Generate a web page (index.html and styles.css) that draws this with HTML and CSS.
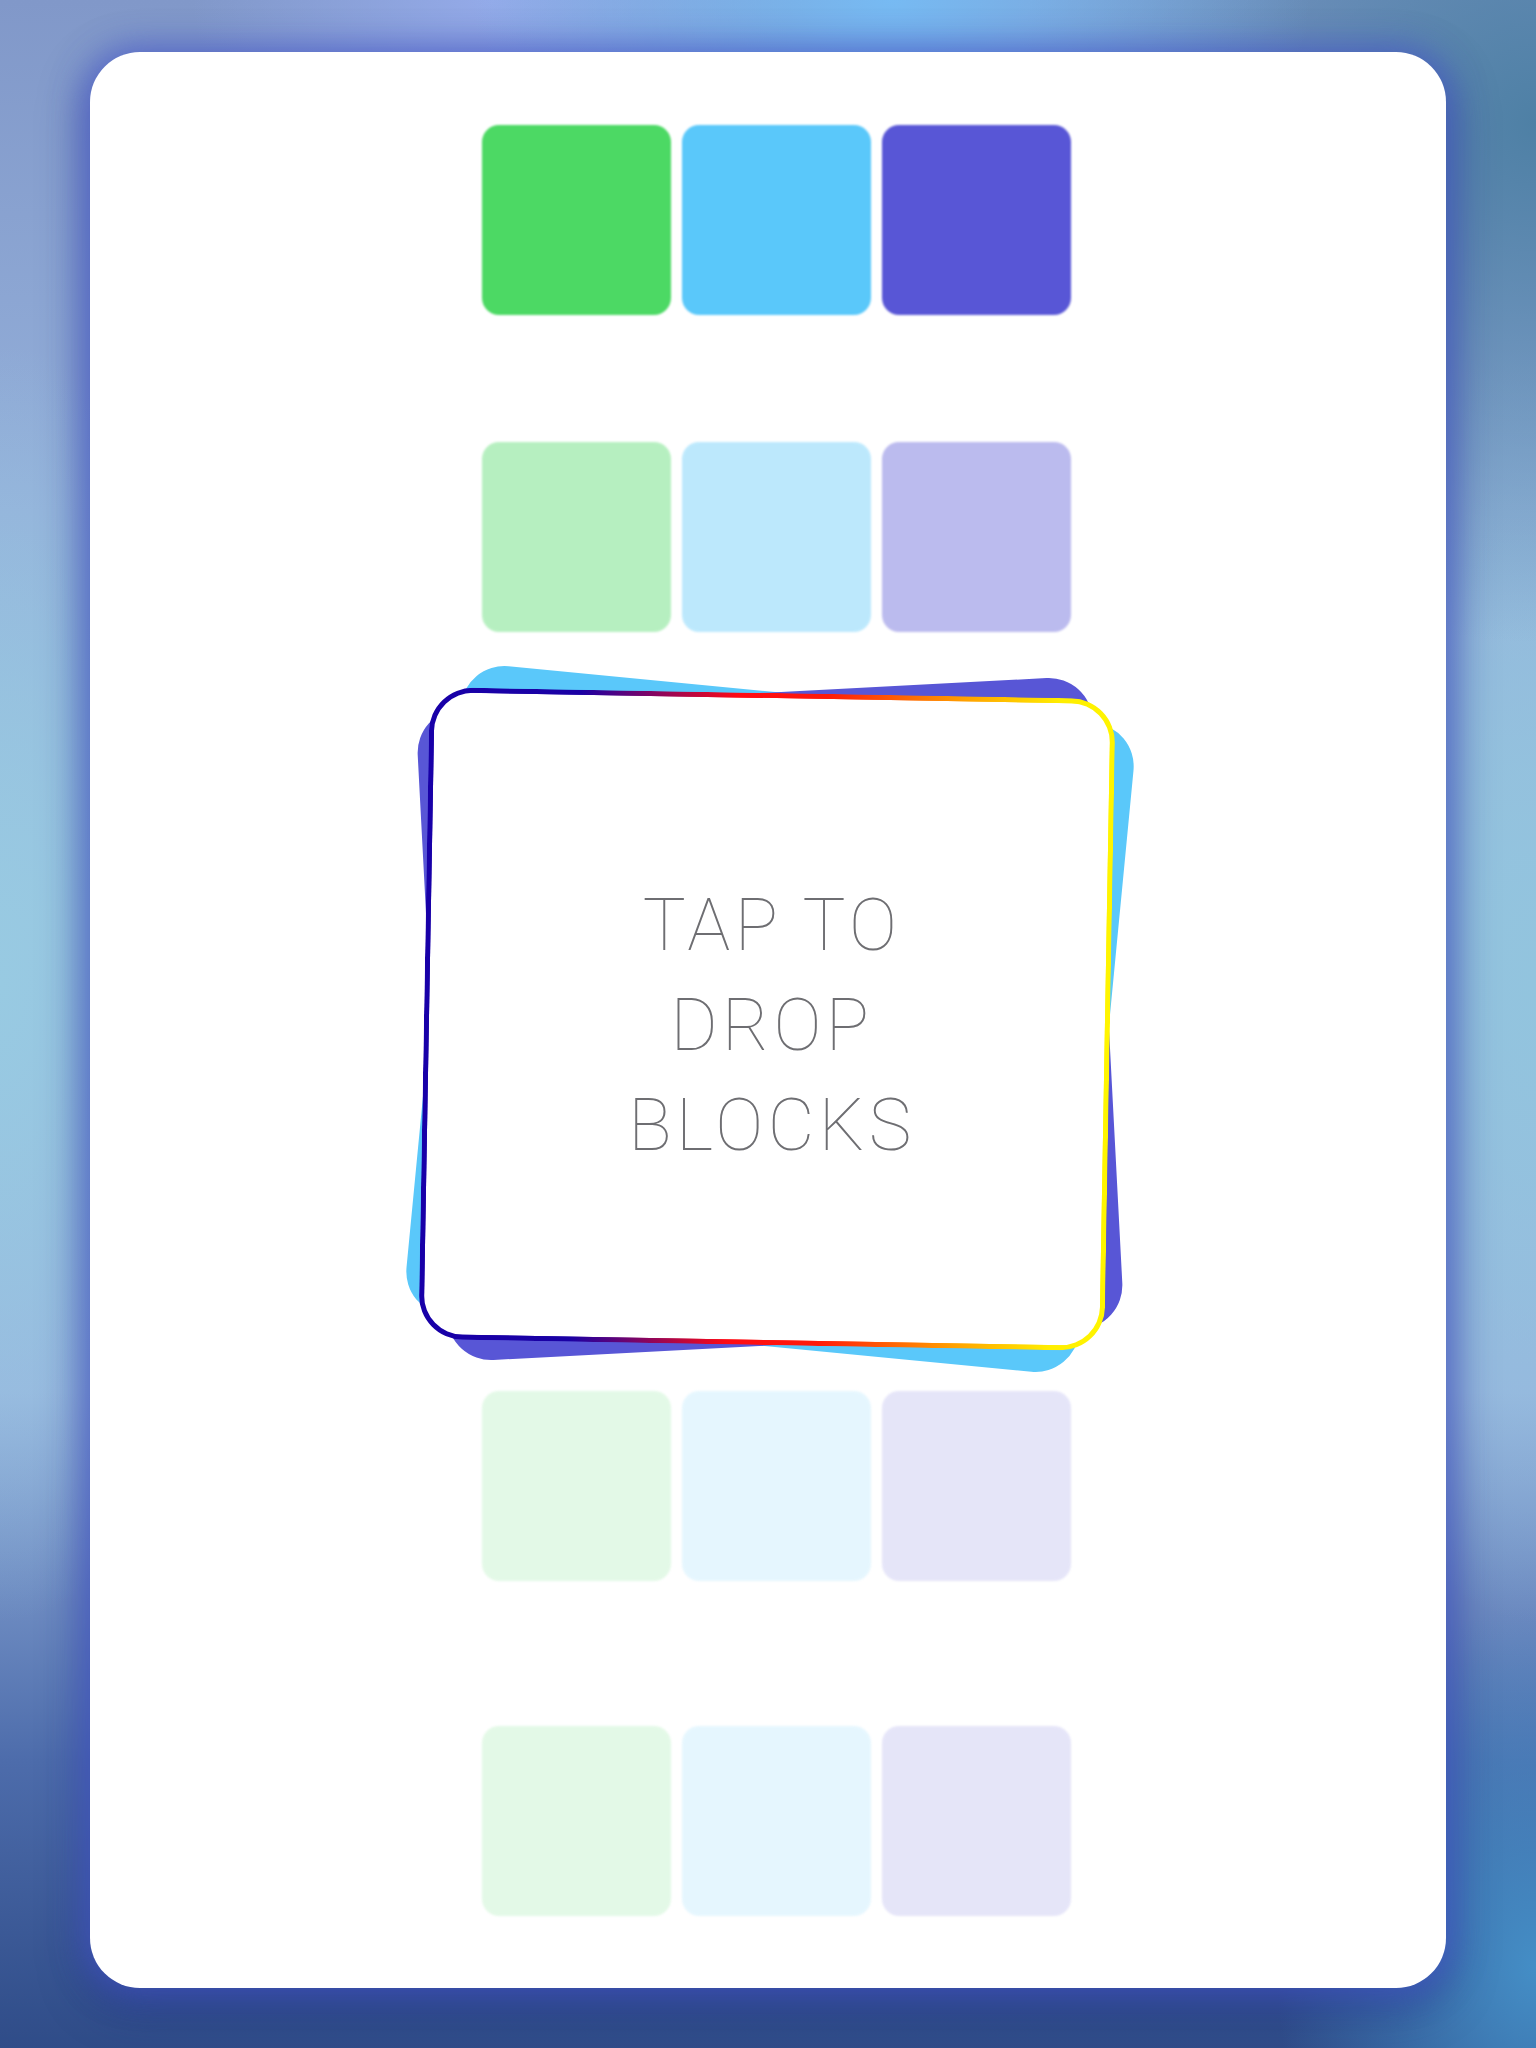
FILE: index.html
```html
<!DOCTYPE html>
<html>
<head>
<meta charset="utf-8">
<link rel="stylesheet" href="styles.css">
</head>
<body>
<div class="card">
  <div class="row r1 op100">
    <div class="blk green"></div><div class="blk blue"></div><div class="blk purple"></div>
  </div>
  <div class="row r2 op40">
    <div class="blk green"></div><div class="blk blue"></div><div class="blk purple"></div>
  </div>
  <div class="row r3 op15">
    <div class="blk green"></div><div class="blk blue"></div><div class="blk purple"></div>
  </div>
  <div class="row r4 op15">
    <div class="blk green"></div><div class="blk blue"></div><div class="blk purple"></div>
  </div>
  <div class="stack">
    <div class="layer l-blue"></div>
    <div class="layer l-purple"></div>
    <div class="layer l-white"></div>
    <div class="label">TAP TO<br>DROP<br>BLOCKS</div>
  </div>
</div>
</body>
</html>
```
FILE: styles.css
```css
html, body {
  margin: 0;
  padding: 0;
}
body {
  width: 1536px;
  height: 2048px;
  overflow: hidden;
  background:
    radial-gradient(ellipse 420px 260px at 58% 0%, rgba(118,188,245,0.95), rgba(118,188,245,0) 100%),
    radial-gradient(ellipse 300px 200px at 32% 0%, rgba(150,172,236,0.9), rgba(150,172,236,0) 100%),
    radial-gradient(ellipse 520px 520px at 100% 6%, rgba(78,128,165,1), rgba(78,128,165,0) 100%),
    radial-gradient(ellipse 260px 640px at 0% 48%, rgba(152,202,226,1), rgba(152,202,226,0) 100%),
    radial-gradient(ellipse 260px 640px at 100% 48%, rgba(146,196,222,1), rgba(146,196,222,0) 100%),
    radial-gradient(ellipse 260px 360px at 100% 96%, rgba(68,142,198,1), rgba(68,142,198,0) 100%),
    linear-gradient(180deg, #8198c9 0%, #94b0da 25%, #98c2df 45%, #97b4de 68%, #4d6cab 86%, #2f4c88 100%);
  font-family: "Roboto", "Liberation Sans", sans-serif;
}
.card {
  position: relative;
  box-sizing: border-box;
  margin: 52px 0 0 90px;
  width: 1356px;
  height: 1936px;
  background: #fff;
  border-radius: 50px;
  box-shadow: 0 0 30px 8px rgba(80, 95, 220, 0.5), 0 14px 40px 8px rgba(30, 45, 130, 0.5);
  padding-top: 73px;
}
.row {
  display: flex;
  gap: 11px;
  margin-left: 392px;
  filter: blur(1.2px);
}
.r2 { margin-top: 127px; }
.r3 { margin-top: 759px; }
.r4 { margin-top: 145px; }
.op100 { opacity: 1; }
.op40 { opacity: 0.4; }
.op15 { opacity: 0.15; }
.blk {
  width: 189px;
  height: 190px;
  border-radius: 17px;
}
.green { background: #4cd964; }
.blue { background: #5ac8fa; }
.purple { background: #5856d6; }

.stack {
  position: absolute;
  left: 342px;
  top: 641px;
  width: 676px;
  height: 652px;
}
.layer {
  position: absolute;
  inset: 0;
  border-radius: 44px;
  box-sizing: border-box;
}
.l-blue {
  background: #5ac8fa;
  transform: rotate(5.5deg);
}
.l-purple {
  background: #5856d6;
  transform: rotate(-3deg);
}
.l-white {
  left: -8px;
  right: -2px;
  border: 5px solid transparent;
  background:
    linear-gradient(#fff, #fff) padding-box,
    linear-gradient(90deg, #1800a8 0%, #1a00a4 22%, #ff0a14 45%, #ff1a0a 58%, #ffa000 78%, #ffee00 92%, #fff500 100%) border-box;
  transform: rotate(1deg);
}
.label {
  position: absolute;
  left: 0;
  right: 0;
  top: 183px;
  padding-left: 4px;
  text-align: center;
  font-family: "Roboto", "Liberation Sans", sans-serif;
  font-weight: 100;
  font-size: 72px;
  line-height: 100px;
  color: #6e6e72;
  letter-spacing: 4.4px;
}
```
